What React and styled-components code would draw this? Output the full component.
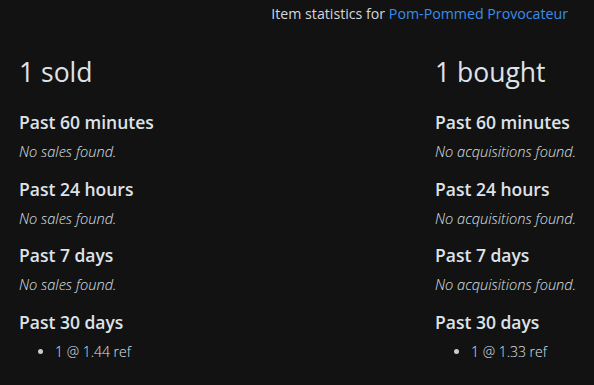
import React from "react";
import styled, { createGlobalStyle } from "styled-components";

const GlobalStyle = createGlobalStyle`
  html, body {
    margin: 0;
    padding: 0;
    background: #121212;
  }
  body {
    font-family: "Open Sans", "Noto Sans", sans-serif;
    color: #dfe2e8;
  }
`;

const Page = styled.div`
  width: 594px;
  height: 385px;
  box-sizing: border-box;
  padding: 0 18px 0 19px;
  overflow: hidden;
`;

const TopBar = styled.div`
  display: flex;
  justify-content: flex-end;
  font-size: 14.2px;
  line-height: 28px;
  padding-right: 8px;
  color: #d4d7dc;

  a {
    color: #3b8ee8;
    text-decoration: none;
  }
`;

const Columns = styled.div`
  display: flex;
  justify-content: space-between;
  margin-top: 27px;
`;

const Column = styled.div`
  display: flex;
  flex-direction: column;
`;

const Total = styled.h1`
  margin: 0 0 21px;
  font-size: 26.5px;
  font-weight: 400;
  line-height: 34px;
`;

const Period = styled.section`
  margin-bottom: 13.5px;
`;

const PeriodTitle = styled.h3`
  margin: 0;
  font-size: 17.5px;
  font-weight: 600;
  line-height: 24px;
`;

const Empty = styled.p`
  margin: 5px 0 0;
  font-size: 14.6px;
  font-style: italic;
  font-weight: 300;
  line-height: 24px;
`;

const Trades = styled.ul`
  margin: 8px 0 0;
  padding-left: 36px;
  font-size: 14px;
  font-weight: 300;
  line-height: 20px;

  li::marker {
    color: #c8ccd2;
  }
`;

const data = [
  {
    title: "1 sold",
    empty: "No sales found.",
    trades: ["1 @ 1.44 ref"],
  },
  {
    title: "1 bought",
    empty: "No acquisitions found.",
    trades: ["1 @ 1.33 ref"],
  },
];

const periods = ["Past 60 minutes", "Past 24 hours", "Past 7 days", "Past 30 days"];

function App() {
  return (
    <Page>
      <GlobalStyle />
      <TopBar>
        <span>
          Item statistics for <a href="#">Pom-Pommed Provocateur</a>
        </span>
      </TopBar>
      <Columns>
        {data.map((col) => (
          <Column key={col.title}>
            <Total>{col.title}</Total>
            {periods.map((p, i) => (
              <Period key={p}>
                <PeriodTitle>{p}</PeriodTitle>
                {i < 3 ? (
                  <Empty>{col.empty}</Empty>
                ) : (
                  <Trades>
                    {col.trades.map((t) => (
                      <li key={t}>{t}</li>
                    ))}
                  </Trades>
                )}
              </Period>
            ))}
          </Column>
        ))}
      </Columns>
    </Page>
  );
}

export default App;
